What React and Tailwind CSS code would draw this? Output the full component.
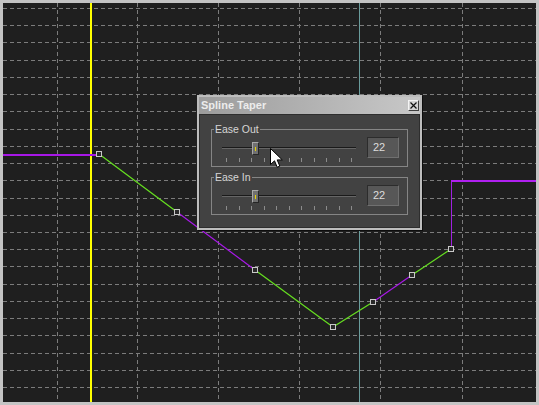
import React from 'react';

const FONT = { fontFamily: '"Liberation Sans", Arial, sans-serif' };

// grid positions (page coords)
const vLines = [57, 137, 218, 299, 380, 462];
const hLines = Array.from({ length: 23 }, (_, i) => Math.round(8 + i * 17.23));

const segments = [
    { from: [99, 154], to: [177, 212], color: '#66e020' },
    { from: [177, 212], to: [255, 270], color: '#a818e8' },
    { from: [255, 270], to: [333, 327], color: '#66e020' },
    { from: [333, 327], to: [373, 302], color: '#66e020' },
    { from: [373, 302], to: [412, 275], color: '#a818e8' },
    { from: [412, 275], to: [451, 249], color: '#66e020' },
];

const points = [[99, 154], [177, 212], [255, 270], [333, 327], [373, 302], [412, 275], [451, 249]];

const Graph = () => (
    <svg width="533" height="399" className="absolute left-0 top-0">
        <g transform="translate(-3,-3)" shapeRendering="crispEdges">
            {hLines.map((y) => (
                <line key={'h' + y} x1="3" x2="536" y1={y + 0.5} y2={y + 0.5} stroke="#7c7c7c" strokeDasharray="4 3" />
            ))}
            {vLines.map((x) => (
                <line key={'v' + x} x1={x + 0.5} x2={x + 0.5} y1="3" y2="402" stroke="#7c7c7c" strokeDasharray="4 3" />
            ))}
            <rect x="90" y="3" width="1.5" height="399" fill="#ffff00" />
            <rect x="359" y="3" width="1" height="399" fill="#6a9c9c" />
            {/* flat ends */}
            <rect x="3" y="154" width="96" height="1.5" fill="#a818e8" />
            <rect x="451" y="181" width="1" height="68" fill="#a020e0" />
            <rect x="451" y="180" width="85" height="1.5" fill="#b020f0" />
        </g>
        <g transform="translate(-3,-3)">
            {segments.map((s, i) => (
                <line key={i} x1={s.from[0]} y1={s.from[1]} x2={s.to[0]} y2={s.to[1]} stroke={s.color} strokeWidth="1.2" />
            ))}
            {points.map(([x, y]) => (
                <rect key={x} x={x - 2.5} y={y - 2.5} width="5" height="5" fill="#2a2a2a" stroke="#c8c8c8" strokeWidth="1" shapeRendering="crispEdges" />
            ))}
        </g>
    </svg>
);

const Slider = () => (
    <div className="relative w-[134px] mt-[7px]">
        <div className="pt-[5px]">
            <div className="h-[2px] border-t border-t-[#1a1a1a] border-b border-b-[#666666]"></div>
        </div>
        <div className="absolute left-[30px] top-0 w-[7px] h-[13px] bg-[#707070] border border-t-[#a8a8a8] border-l-[#a8a8a8] border-r-[#262626] border-b-[#262626] flex items-center justify-center">
            <div className="w-px h-[4px] bg-[#e6d400]"></div>
        </div>
        <div className="mt-[9px] px-[4px] flex justify-between">
            {Array.from({ length: 11 }).map((_, i) => (
                <div key={i} className="w-px h-[4px] bg-[#8c8c8c]"></div>
            ))}
        </div>
    </div>
);

const Group = ({ label, value, className = '' }) => (
    <fieldset className={`border border-[#858585] w-[197px] ${className}`}>
        <legend className="ml-[2px] px-[1px] text-[10.5px] leading-[12px] text-[#d6d6d6]">{label}</legend>
        <div className="h-[31px] flex justify-between pl-[10px] pr-[8px]">
            <Slider />
            <div className="w-[32px] h-[21px] mt-[2px] bg-[#575757] border border-t-[#2c2c2c] border-l-[#2c2c2c] border-r-[#707070] border-b-[#707070] flex items-center pl-[5px] text-[11px] text-[#dcdcdc]">
                {value}
            </div>
        </div>
    </fieldset>
);

const Dialog = () => (
    <div className="absolute left-[194px] top-[92px] w-[225px] h-[135px] flex flex-col border-2 border-[#bdbdbd] shadow-[1px_1px_0_#0c0c0c]" style={FONT}>
        <div className="h-[17px] flex items-center justify-between pl-[2px] pr-[1px] bg-linear-to-r from-[#9c9c9c] to-[#c8c8c8]">
            <span className="text-[11px] font-bold text-[#ececec] leading-none">Spline Taper</span>
            <div className="w-[11px] h-[11px] bg-[#d4d4d4] border border-t-[#f4f4f4] border-l-[#f4f4f4] border-r-[#404040] border-b-[#404040] flex items-center justify-center">
                <svg width="7" height="7" viewBox="0 0 7 7">
                    <path d="M0.5 0.5 L6.5 6.5 M6.5 0.5 L0.5 6.5" stroke="#111" strokeWidth="1.2" />
                </svg>
            </div>
        </div>
        <div className="flex-1 bg-[#424242] border border-[#2e2e2e] pt-[8px] pl-[11px]">
            <Group label="Ease Out" value="22" />
            <Group label="Ease In" value="22" className="mt-[4px]" />
        </div>
    </div>
);

const Cursor = () => (
    <svg width="14" height="21" viewBox="0 0 14 21" className="absolute left-[267px] top-[145px]">
        <path d="M0.5 0.5 L0.5 16.5 L4.5 12.8 L7.2 19.2 L9.8 18.1 L7.2 11.9 L12.3 11.9 Z" fill="#ffffff" stroke="#000000" strokeWidth="1" strokeLinejoin="miter" />
    </svg>
);

export default function App() {
    return (
        <div className="w-[539px] h-[405px] bg-[#c4c4c4] p-[3px]">
            <div className="relative w-full h-full bg-[#1f1f1f] overflow-hidden">
                <Graph />
                <Dialog />
                <Cursor />
            </div>
        </div>
    );
}
